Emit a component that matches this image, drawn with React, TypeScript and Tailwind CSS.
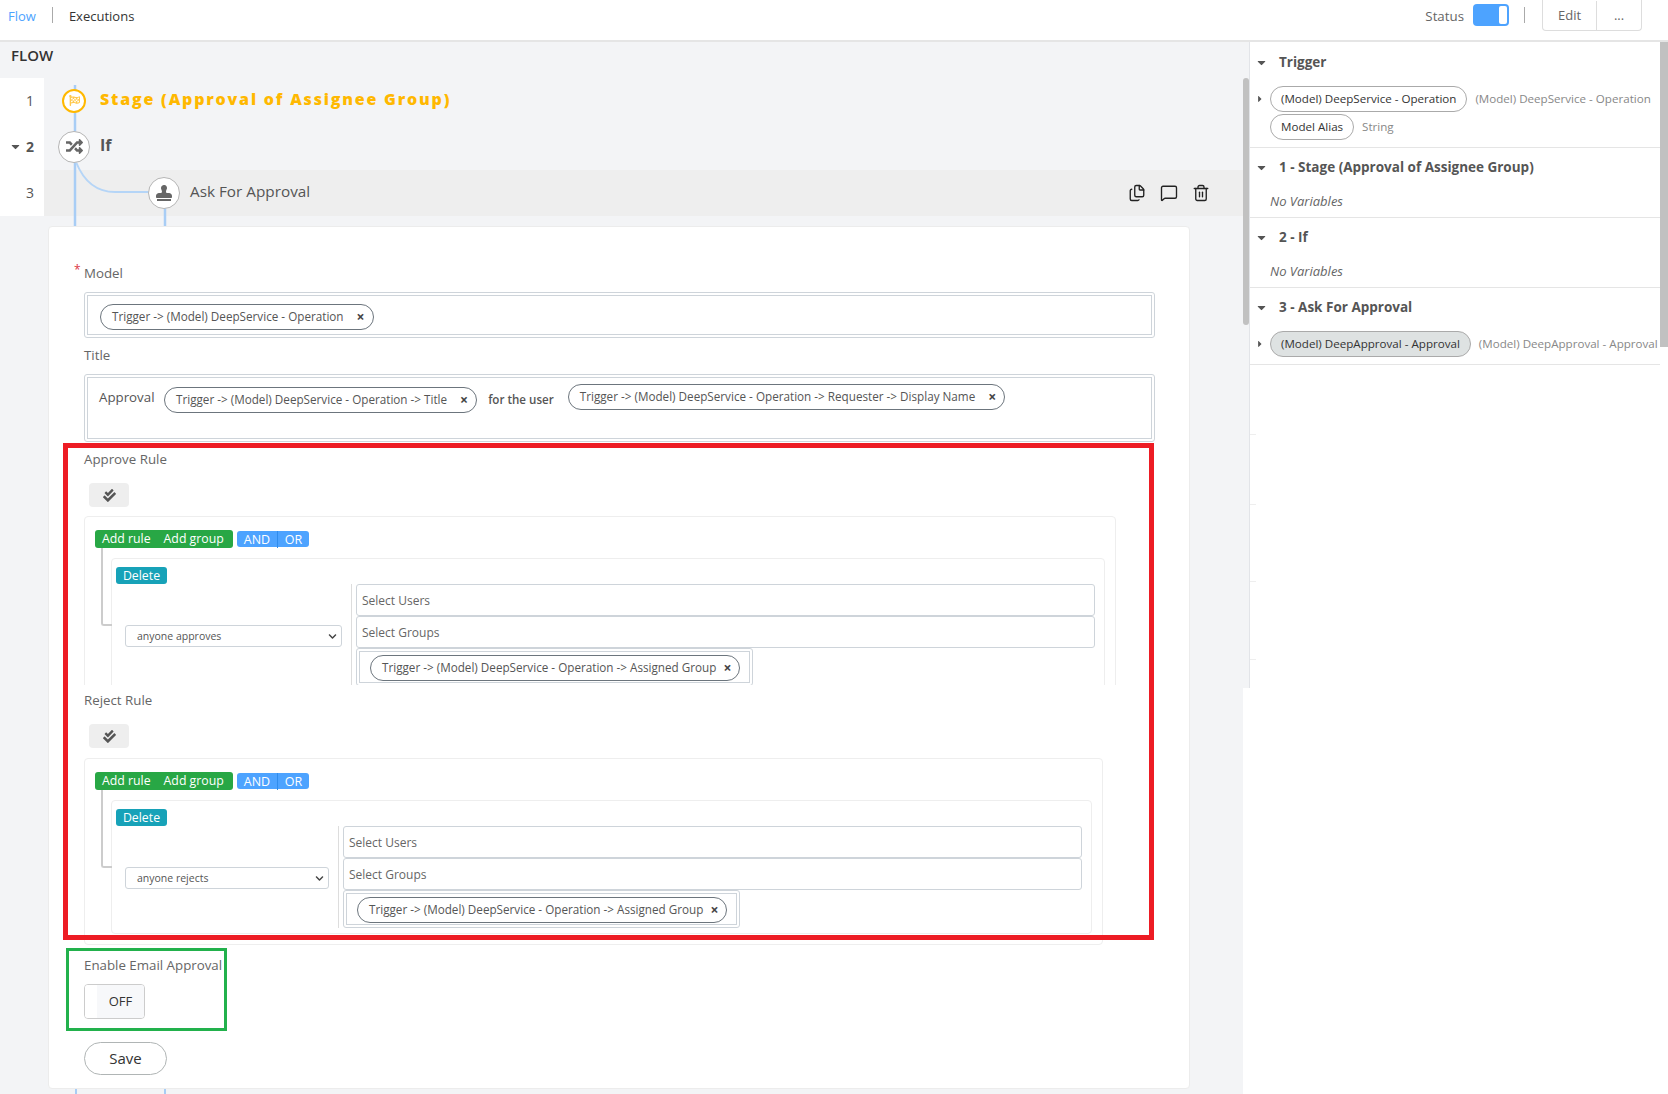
import React from "react";
import { FaCaretDown, FaCaretRight, FaCheckDouble, FaChevronDown, FaFlagCheckered, FaRandom, FaStamp } from "react-icons/fa";
import { Files, MessageSquare, Trash2 } from "lucide-react";

const font = "font-['Open_Sans','Noto_Sans',sans-serif]";

function Chip({ children, cls = "", gap = "ml-[13px]" }: { children: React.ReactNode; cls?: string; gap?: string }) {
  return (
    <span className={`inline-flex items-center h-[26px] rounded-full border border-[#6c757d] pl-[11px] pr-[8px] text-[11.7px] text-[#555] whitespace-nowrap ${cls}`}>
      {children}
      <span className={`${gap} text-[14px] font-bold text-[#444] leading-none`}>×</span>
    </span>
  );
}

function RuleBuilder({ select, outer, selectW, inner }: { select: string; outer: string; selectW: string; inner: string }) {
  return (
    <div className={`relative ml-[16px] ${outer} rounded-[4px] border border-[#eeeeee]`}>
      <div className="flex items-start gap-[4px] pl-[10px] pt-[13px]">
        <div className="flex h-[18px] w-[138px] items-center gap-[13px] rounded-[3px] bg-[#28a745] pl-[7px] pt-[1px] text-[12.3px] text-white">
          <span>Add rule</span>
          <span>Add group</span>
        </div>
        <div className="mt-[1px] flex h-[16px] w-[72px] items-center rounded-[3px] bg-[#4da3ff] text-[12.5px] text-white">
          <span className="w-[41px] border-r border-[#2f8cec] pt-[1px] text-center leading-[16px]">AND</span>
          <span className="w-[31px] pt-[1px] text-center leading-[16px]">OR</span>
        </div>
      </div>
      <div className="absolute left-[16px] top-[31px] h-[78px] w-[11px] rounded-bl-[3px] border-b-2 border-l-2 border-[#cccccc]" />
      <div className={`ml-[26px] mr-[10px] mt-[10px] ${inner} rounded-[4px] border border-[#eeeeee] pl-[4px] pr-[9px] pt-[8px]`}>
        <span className="flex h-[17px] w-[51px] items-center justify-center rounded-[3px] bg-[#17a2b8] pt-[1px] text-[12.3px] text-white">Delete</span>
        <div className="flex">
          <div className={`${selectW} shrink-0 px-[9px] pt-[41px]`}>
            <div className="flex h-[22px] items-center justify-between rounded-[3px] border border-[#ced4da] pl-[11px] pr-[4px] pt-[1px] text-[10.5px] text-[#555]">
              <span>{select}</span>
              <FaChevronDown className="text-[#444]" size={9} />
            </div>
          </div>
          <div className="flex-1 border-l border-[#dddddd] pl-[4px]">
            <div className="flex h-[32px] items-center rounded-[3px] border border-[#ced4da] pl-[5px] pt-[1px] text-[12px] text-[#666]">Select Users</div>
            <div className="flex h-[32px] items-center rounded-[3px] border border-[#ced4da] pl-[5px] pt-[1px] text-[12px] text-[#666]">Select Groups</div>
            <div className="w-[397px] rounded-[3px] border border-[#ced4da] p-[2px]">
              <div className="h-[32px] border border-[#ced4da] pl-[10px] pt-[2px]">
                <Chip gap="ml-[7px]" cls="pl-[10px]">Trigger -&gt; (Model) DeepService - Operation -&gt; Assigned Group</Chip>
              </div>
            </div>
          </div>
        </div>
      </div>
    </div>
  );
}

function CheckBtn({ mb = "mb-[9px]" }: { mb?: string }) {
  return (
    <div className={`ml-[21px] ${mb} mt-[14px] flex h-[24px] w-[40px] items-center justify-center rounded-[4px] bg-[#eeeeee]`}>
      <FaCheckDouble size={13} className="text-[#555]" />
    </div>
  );
}

function Panel() {
  const Head = ({ children }: { children: React.ReactNode }) => (
    <div className="flex h-[20px] items-center text-[13.5px] font-bold text-[#555]">
      <FaCaretDown size={13} className="ml-[5px] mr-[11px] text-[#555]" />
      <span>{children}</span>
    </div>
  );
  const Pill = ({ children, cls = "" }: { children: React.ReactNode; cls?: string }) => (
    <span className={`inline-flex h-[26px] items-center rounded-full border border-[#aaaaaa] px-[10px] text-[11.6px] text-[#333] whitespace-nowrap ${cls}`}>{children}</span>
  );
  const Meta = ({ children }: { children: React.ReactNode }) => (
    <span className="ml-[8px] text-[11.6px] text-[#888] whitespace-nowrap">{children}</span>
  );
  const NoVar = () => <div className="mt-[15px] pl-[20px] text-[13px] italic text-[#666]">No Variables</div>;
  return (
    <aside className="relative h-[646px] w-[419px] shrink-0 overflow-hidden border-l border-[#e2e4e8] bg-white">
      <div className="w-[410px]">
        <div className="h-[106px] border-b border-[#e5e5e5] pt-[10px]">
          <Head>Trigger</Head>
          <div className="mt-[14px] flex items-center whitespace-nowrap">
            <FaCaretRight size={10} className="ml-[5px] mr-[5px] shrink-0 text-[#555]" />
            <Pill>(Model) DeepService - Operation</Pill>
            <Meta>(Model) DeepService - Operation</Meta>
          </div>
          <div className="mt-[2px] flex items-center pl-[20px]">
            <Pill>Model Alias</Pill>
            <Meta>String</Meta>
          </div>
        </div>
        <div className="h-[70px] border-b border-[#e5e5e5] pt-[9px]">
          <Head>1 - Stage (Approval of Assignee Group)</Head>
          <NoVar />
        </div>
        <div className="h-[70px] border-b border-[#e5e5e5] pt-[9px]">
          <Head>2 - If</Head>
          <NoVar />
        </div>
        <div className="h-[77px] border-b border-[#e5e5e5] pt-[9px]">
          <Head>3 - Ask For Approval</Head>
          <div className="mt-[14px] flex items-center whitespace-nowrap">
            <FaCaretRight size={10} className="ml-[5px] mr-[5px] shrink-0 text-[#555]" />
            <Pill cls="bg-[#dee2e2]">(Model) DeepApproval - Approval</Pill>
            <Meta>(Model) DeepApproval - Approval</Meta>
          </div>
        </div>
      </div>
      <div className="absolute right-0 top-0 h-[305px] w-[8px] bg-[#c1c1c1]" />
      <div className="absolute left-0 top-[392px] h-px w-[6px] bg-[#eeeeee]" />
      <div className="absolute left-0 top-[462px] h-px w-[6px] bg-[#eeeeee]" />
      <div className="absolute left-0 top-[539px] h-px w-[6px] bg-[#eeeeee]" />
      <div className="absolute left-0 top-[617px] h-px w-[6px] bg-[#eeeeee]" />
    </aside>
  );
}

export default function App() {
  return (
    <div className={`${font} h-[1094px] w-[1668px] overflow-hidden bg-white`}>
      <header className="flex h-[42px] items-start border-b-2 border-[#e5e5e5] text-[13px]">
        <span className="ml-[8px] mt-[7px] text-[#4da3ff]">Flow</span>
        <span className="ml-[16px] mt-[7px] h-[16px] w-px bg-[#aaaaaa]" />
        <span className="ml-[16px] mt-[7px] text-[#333]">Executions</span>
        <span className="ml-auto mt-[7px] text-[13.3px] text-[#666]">Status</span>
        <span className="ml-[9px] mt-[4px] flex h-[22px] w-[36px] justify-end rounded-[4px] bg-[#4da3ff] p-[2px]">
          <span className="h-full w-[8px] rounded-[2px] bg-white" />
        </span>
        <span className="ml-[15px] mt-[7px] h-[16px] w-px bg-[#aaaaaa]" />
        <div className="ml-[17px] mr-[26px] flex h-[31px] w-[100px] rounded-b-[4px] border border-t-0 border-[#dddddd] pt-[1px] text-[#666]">
          <span className="flex w-[54px] items-center justify-center border-r border-[#dddddd]">Edit</span>
          <span className="flex flex-1 items-center justify-center">...</span>
        </div>
      </header>
      <div className="flex h-[1052px]">
        <main className="relative h-full w-[1249px] shrink-0 bg-[#f3f4f6]">
          <div className="h-[36px] pl-[11px] pt-[2px] text-[15px] font-semibold text-[#333]">FLOW</div>
          <div className="relative">
            {/* connectors */}
            <svg className="absolute left-0 top-0 z-[1]" width="200" height="160" fill="none">
              <path d="M75 7V160" stroke="#a8cdf5" strokeWidth="2.5" />
              <path d="M165 125V160" stroke="#a8cdf5" strokeWidth="2.5" />
              <path d="M76 84C84 104 96 114 115 114H150" stroke="#b5d5f7" strokeWidth="2" />
            </svg>
            <div className="flex h-[45px] items-center">
              <div className="flex h-full w-[44px] items-center justify-end bg-white pr-[10px] text-[14px] text-[#555]">1</div>
              <span className="relative z-10 ml-[18px] flex h-[24px] w-[24px] items-center justify-center rounded-full border-2 border-[#ffb800] bg-white">
                <FaFlagCheckered size={11} className="text-[#ffc94d]" />
              </span>
              <span className="mb-[3px] ml-[14px] text-[16px] font-extrabold tracking-[1.8px] text-[#ffb800]">Stage (Approval of Assignee Group)</span>
            </div>
            <div className="flex h-[47px] items-center">
              <div className="flex h-full w-[44px] items-center justify-end gap-[4px] bg-white pr-[10px] text-[14px] font-bold text-[#555]"><FaCaretDown size={13} />2</div>
              <span className="relative z-10 ml-[14px] flex h-[32px] w-[32px] items-center justify-center rounded-full border border-[#b5b5b5] bg-white">
                <FaRandom size={17} className="text-[#666]" />
              </span>
              <span className="mb-[4px] ml-[10px] text-[16px] font-bold text-[#555]">If</span>
            </div>
            <div className="flex h-[46px] items-center">
              <div className="flex h-full w-[44px] items-center justify-end bg-white pr-[10px] text-[14px] text-[#555]"><span className="mb-[1px]">3</span></div>
              <div className="flex h-full flex-1 items-center bg-[#eeeeee]">
                <span className="relative z-10 ml-[104px] flex h-[32px] w-[32px] items-center justify-center rounded-full border border-[#b5b5b5] bg-white">
                  <FaStamp size={16} className="text-[#666]" />
                </span>
                <span className="mb-[3px] ml-[10px] text-[15.3px] text-[#555]">Ask For Approval</span>
                <div className="ml-auto mr-[39px] flex items-center gap-[14px] text-[#222]">
                  <Files size={18} strokeWidth={1.8} />
                  <MessageSquare size={18} strokeWidth={1.8} />
                  <Trash2 size={18} strokeWidth={1.8} />
                </div>
              </div>
            </div>
          </div>
          <section className="relative z-[2] ml-[48px] mt-[10px] h-[863px] w-[1142px] rounded-[4px] border border-[#ececec] bg-white pl-[35px] text-[#666]">
            <div className="relative pt-[36px] text-[13.3px] leading-[20px]">
              <span className="absolute -left-[10px] top-[33px] text-[12px] text-[#dc3545]">*</span>
              Model
            </div>
            <div className="mt-[9px] h-[46px] w-[1071px] rounded-[3px] border border-[#ced4da] p-[2px]">
              <div className="h-full border border-[#ced4da] pl-[12px] pt-[7px]">
                <Chip>Trigger -&gt; (Model) DeepService - Operation</Chip>
              </div>
            </div>
            <div className="mt-[7px] text-[13.3px] leading-[20px]">Title</div>
            <div className="mt-[9px] h-[68px] w-[1071px] rounded-[3px] border border-[#ced4da] p-[2px]">
              <div className="flex h-full items-start border border-[#ced4da] pl-[11px] pt-[8px]">
                <span className="mt-[2px] w-[58px] whitespace-nowrap text-[13.3px] text-[#555]">Approval</span>
                <Chip cls="ml-[7px] mt-[1px]">Trigger -&gt; (Model) DeepService - Operation -&gt; Title</Chip>
                <span className="ml-[11px] mt-[5px] text-[11.6px] font-semibold text-[#555]">for the user</span>
                <Chip cls="ml-[14px] -mt-[2px]">Trigger -&gt; (Model) DeepService - Operation -&gt; Requester -&gt; Display Name</Chip>
              </div>
            </div>
            {/* annotated rule section */}
            <div className="relative -ml-[21px] mt-[1px] h-[497px] w-[1091px] p-[5px]">
              <div className="pl-[16px] pt-[1px] text-[13.3px] leading-[20px]">Approve Rule</div>
              <CheckBtn />
              <div className="h-[169px] overflow-hidden">
                <RuleBuilder select="anyone approves" outer="w-[1032px] h-[200px]" selectW="w-[235px]" inner="h-[160px]" />
              </div>
              <div className="mt-[5px] pl-[16px] text-[13.3px] leading-[20px]">Reject Rule</div>
              <CheckBtn mb="mb-[10px]" />
              <RuleBuilder select="anyone rejects" outer="w-[1019px] h-[187px]" selectW="w-[222px]" inner="h-[134px]" />
              <div className="pointer-events-none absolute inset-0 border-[5px] border-[#ed1c24]" />
            </div>
            <div className="-ml-[18px] mt-[8px] h-[83px] w-[161px] border-[3px] border-[#22b14c] pl-[15px] pt-[4px]">
              <div className="whitespace-nowrap text-[13.3px] leading-[20px]">Enable Email Approval</div>
              <div className="mt-[9px] flex h-[35px] w-[61px] overflow-hidden rounded-[4px] border border-[#cccccc]">
                <span className="w-[12px] bg-white" />
                <span className="flex flex-1 items-center justify-center bg-[#f7f8fa] text-[13px] text-[#333]">OFF</span>
              </div>
            </div>
            <div className="mt-[11px] flex h-[33px] w-[83px] items-center justify-center rounded-full border border-[#b0b5b5] text-[15px] text-[#333]">Save</div>
          </section>
          <div className="absolute left-[75px] top-[1047px] h-[5px] w-[2px] bg-[#a8cdf5]" />
          <div className="absolute left-[164px] top-[1047px] h-[5px] w-[2px] bg-[#a8cdf5]" />
          <div className="absolute right-0 top-[36px] z-[3] h-[247px] w-[6px] rounded-[3px] bg-[#c1c1c1]" />
          <div className="absolute right-0 top-[646px] bottom-0 w-[6px] bg-white" />
        </main>
        <Panel />
      </div>
    </div>
  );
}
